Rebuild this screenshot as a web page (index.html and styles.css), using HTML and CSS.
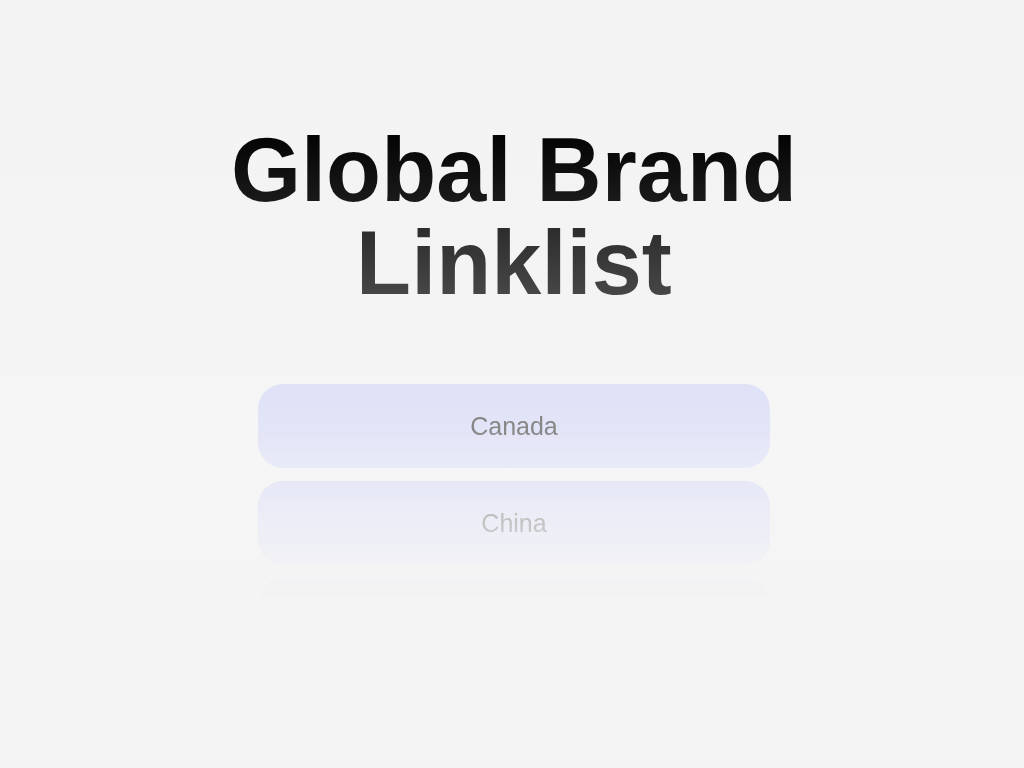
FILE: index.html
```html
<!DOCTYPE html>
<html lang="en">
<head>
<meta charset="utf-8">
<title>Global Brand Linklist</title>
<link rel="stylesheet" href="styles.css">
</head>
<body>
<main class="page">
  <h1 class="title">Global Brand<br>Linklist</h1>
  <nav class="list">
    <a class="item" href="#">Canada</a>
    <a class="item" href="#">China</a>
    <a class="item" href="#">France</a>
  </nav>
</main>
</body>
</html>
```
FILE: styles.css
```css
html, body {
  margin: 0;
  height: 100%;
}
body {
  background: linear-gradient(to bottom, #f3f3f3 0%, #f4f4f4 45%, #f6f6f6 55%, #f5f5f5 65%, #f4f4f4 100%);
  font-family: "Liberation Sans", Arial, sans-serif;
}
.page {
  display: flex;
  flex-direction: column;
  align-items: center;
  padding-top: 124px;
  padding-left: 4px;
}
.title {
  margin: 0;
  font-size: 90px;
  line-height: 93px;
  font-weight: 700;
  text-align: center;
  letter-spacing: 0.1px;
  background: linear-gradient(to bottom, #000000 0%, #1c1c1c 45%, #2c2c2c 55%, #4c4c4c 100%);
  -webkit-background-clip: text;
  background-clip: text;
  color: transparent;
}
.list {
  margin-top: 74px;
  width: 512px;
  display: flex;
  flex-direction: column;
  gap: 13px;
  -webkit-mask-image: linear-gradient(to bottom, #000 16%, rgba(0,0,0,0.45) 50%, rgba(0,0,0,0.1) 70%, rgba(0,0,0,0.04) 78%, transparent 82%);
  mask-image: linear-gradient(to bottom, #000 16%, rgba(0,0,0,0.45) 50%, rgba(0,0,0,0.1) 70%, rgba(0,0,0,0.04) 78%, transparent 82%);
}
.item {
  flex: none;
  height: 84px;
  border-radius: 25px;
  background: linear-gradient(to bottom, #dfe1f7, #e5e7f8);
  display: flex;
  align-items: center;
  justify-content: center;
  color: #878787;
  font-size: 25px;
  text-decoration: none;
}
```
